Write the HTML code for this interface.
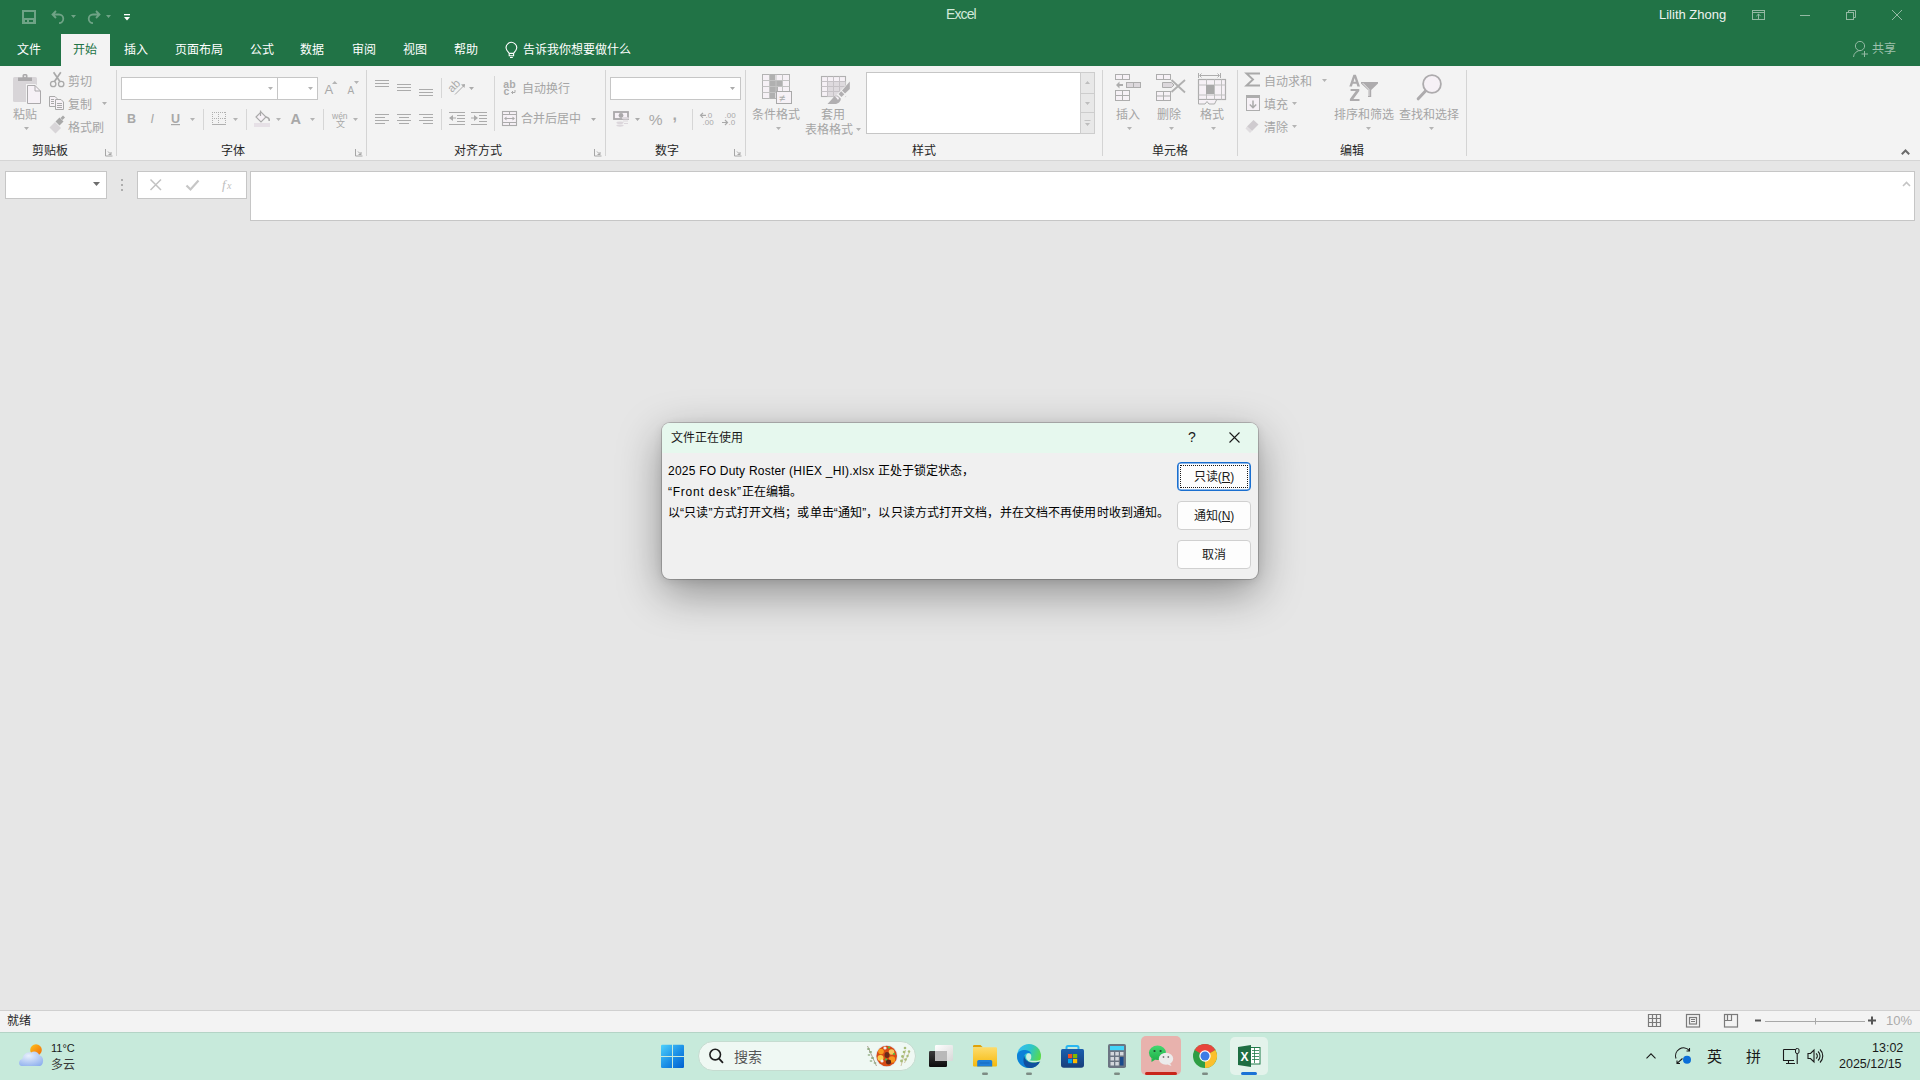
<!DOCTYPE html>
<html lang="zh-CN"><head><meta charset="utf-8">
<style>
*{margin:0;padding:0;box-sizing:border-box}
html,body{width:1920px;height:1080px;overflow:hidden;background:#e6e6e6;font-family:"Liberation Sans",sans-serif;}
.a{position:absolute}
.t{position:absolute;white-space:nowrap;line-height:1}
svg{position:absolute;overflow:visible}
#title{left:0;top:0;width:1920px;height:66px;background:#217346}
.tab{position:absolute;top:43px;font-size:12px;font-weight:500;color:#fff;line-height:14px;white-space:nowrap}
#ribbon{left:0;top:66px;width:1920px;height:95px;background:#f3f3f3;border-bottom:1px solid #d5d5d5}
.sep{position:absolute;width:1px;background:#d4d4d4}
.gl{position:absolute;top:78px;font-size:12px;font-weight:500;color:#262626;line-height:14px;white-space:nowrap}
.dt{position:absolute;margin-top:1px;font-size:12px;font-weight:500;color:#a5a5a5;line-height:14px;white-space:nowrap}
.box{position:absolute;background:#fff;border:1px solid #c6c6c6}
#status{left:0;top:1010px;width:1920px;height:22px;background:#f3f3f3;border-top:1px solid #d0d0d0}
#taskbar{left:0;top:1032px;width:1920px;height:48px;background:#c7eadb;box-shadow:inset 0 1px 0 #b4d4c6}
#dlg{font-weight:500;left:662px;top:423px;width:596px;height:156px;background:#f0f0f0;border-radius:8px;box-shadow:0 14px 44px rgba(0,0,0,0.38),0 2px 10px rgba(0,0,0,0.10),0 0 0 1px rgba(0,0,0,0.18);overflow:hidden}
.btn{position:absolute;left:515px;width:74px;height:29px;background:#fdfdfd;border:1px solid #d0d0d0;border-radius:4px;font-size:12px;line-height:29px;text-align:center;color:#1a1a1a}
</style></head>
<body>
<!-- TITLE BAR -->
<div id="title" class="a">
  <div class="t" style="left:946px;top:7px;font-size:14px;color:#d2e9da;letter-spacing:-0.9px">Excel</div>
  <div class="t" style="left:1659px;top:8px;font-size:13px;color:#eef2ef">Lilith Zhong</div>
  <div class="tab" style="left:17px">文件</div>
  <div class="a" style="left:61px;top:34px;width:49px;height:32px;background:#f3f3f3"></div>
  <div class="tab" style="left:73px;color:#217346">开始</div>
  <div class="tab" style="left:124px">插入</div>
  <div class="tab" style="left:175px">页面布局</div>
  <div class="tab" style="left:250px">公式</div>
  <div class="tab" style="left:300px">数据</div>
  <div class="tab" style="left:352px">审阅</div>
  <div class="tab" style="left:403px">视图</div>
  <div class="tab" style="left:454px">帮助</div>
  <div class="tab" style="left:523px">告诉我你想要做什么</div>
  <div class="tab" style="left:1872px;top:42px;color:#9ec1ad">共享</div>
  <svg width="1920" height="66" style="left:0;top:0">
    <g fill="#6fa386">
      <path fill-rule="evenodd" d="M22,10H36V24H22Z M24,12H34V18H24Z M25,20H27V22H25Z M29,20H33V22H29Z"/>
      <path d="M71,15H76L73.5,18Z M106,15H111L108.5,18Z"/>
    </g>
    <g fill="none" stroke="#6fa386" stroke-width="1.8">
      <path d="M52.5,14.5H59A4.3,4.3 0 0 1 59,23.1 M56,11 L52.5,14.5 L56,18"/>
      <path d="M99.5,14.5H93A4.3,4.3 0 0 0 93,23.1 M96,11 L99.5,14.5 L96,18"/>
    </g>
    <g fill="#fff"><rect x="124" y="14" width="6" height="1.3"/><path d="M124,17H130L127,20.5Z"/></g>
    <g fill="none" stroke="#93b9a3" stroke-width="1">
      <rect x="1752.5" y="10.5" width="12" height="9"/><path d="M1752.5,12.5H1764.5 M1758.5,19.5V14 M1756.3,16.2L1758.5,14L1760.7,16.2"/>
      <path d="M1800,15.5H1810"/>
      <rect x="1846.5" y="12.5" width="7" height="7"/><path d="M1848.5,12.5V10.5H1855.5V17.5H1853.5"/>
      <path d="M1892,10L1902,20M1902,10L1892,20"/>
      <circle cx="1860" cy="46" r="4.6"/><path d="M1853.5,57A7,7 0 0 1 1861,50.5 M1864.5,51V57 M1861.5,54H1868"/>
    </g>
    <g fill="none" stroke="#fff" stroke-width="1.1">
      <path d="M509.2,53.4L506.9,50.2A5.2,5.2 0 1 1 515.9,50.2L513.6,53.4Z M509.2,53.4V55.8H513.6V53.4 M510,57.5H512.8"/>
    </g>
  </svg>
</div>

<!-- RIBBON -->
<div id="ribbon" class="a">
  <div class="sep" style="left:116px;top:4px;height:86px"></div>
  <div class="sep" style="left:366px;top:4px;height:86px"></div>
  <div class="sep" style="left:605px;top:4px;height:86px"></div>
  <div class="sep" style="left:745px;top:4px;height:86px"></div>
  <div class="sep" style="left:1102px;top:4px;height:86px"></div>
  <div class="sep" style="left:1237px;top:4px;height:86px"></div>
  <div class="sep" style="left:1466px;top:4px;height:86px"></div>
  <div class="box" style="left:121px;top:11px;width:157px;height:23px"></div>
  <div class="box" style="left:277px;top:11px;width:41px;height:23px"></div>
  <div class="box" style="left:610px;top:11px;width:131px;height:23px"></div>
  <div class="box" style="left:866px;top:6px;width:215px;height:62px"></div>
  <div class="a" style="left:1080px;top:6px;width:15px;height:62px;background:#e8e8e8;border:1px solid #cdcdcd"></div>
  <div class="a" style="left:1080px;top:27px;width:15px;height:1px;background:#cdcdcd"></div>
  <div class="a" style="left:1080px;top:46px;width:15px;height:1px;background:#cdcdcd"></div>
  <div class="dt" style="left:13px;top:41px">粘贴</div>
  <div class="dt" style="left:68px;top:8px">剪切</div>
  <div class="dt" style="left:68px;top:31px">复制</div>
  <div class="dt" style="left:68px;top:54px">格式刷</div>
  <div class="dt" style="left:522px;top:15px">自动换行</div>
  <div class="dt" style="left:521px;top:45px">合并后居中</div>
  <div class="dt" style="left:752px;top:41px">条件格式</div>
  <div class="dt" style="left:821px;top:41px">套用</div>
  <div class="dt" style="left:805px;top:56px">表格格式</div>
  <div class="dt" style="left:1116px;top:41px">插入</div>
  <div class="dt" style="left:1157px;top:41px">删除</div>
  <div class="dt" style="left:1200px;top:41px">格式</div>
  <div class="dt" style="left:1264px;top:8px">自动求和</div>
  <div class="dt" style="left:1264px;top:31px">填充</div>
  <div class="dt" style="left:1264px;top:54px">清除</div>
  <div class="dt" style="left:1334px;top:41px">排序和筛选</div>
  <div class="dt" style="left:1399px;top:41px">查找和选择</div>
  <div class="gl" style="left:32px">剪贴板</div>
  <div class="gl" style="left:221px">字体</div>
  <div class="gl" style="left:454px">对齐方式</div>
  <div class="gl" style="left:655px">数字</div>
  <div class="gl" style="left:912px">样式</div>
  <div class="gl" style="left:1152px">单元格</div>
  <div class="gl" style="left:1340px">编辑</div>
</div>

<!-- RIBBON ICONS -->
<svg width="1920" height="170" style="left:0;top:0">
  <!-- clipboard -->
  <rect x="13" y="77" width="24" height="25" rx="1.5" fill="#d8d5d8"/>
  <path d="M18,77.5H32V81H18Z M22.5,77.5V75.5A1.5,1.5 0 0 1 24,74H26A1.5,1.5 0 0 1 27.5,75.5V77.5Z" fill="#aba9ab"/>
  <rect x="24.2" y="75.5" width="1.6" height="1.6" fill="#f3f3f3"/>
  <path d="M26,84H35.5L41.5,90V105H26Z" fill="#f3f3f3"/>
  <path d="M27.5,85.5H35L40.5,91V103.5H27.5Z" fill="#f6f1f6" stroke="#aba9ab" stroke-width="1"/>
  <path d="M35,85.5V91H40.5" fill="none" stroke="#aba9ab" stroke-width="1"/>
  <path d="M24,127H29L26.5,130Z M102,102H107L104.5,105Z" fill="#b0b0b0"/>
  <!-- scissors -->
  <g fill="none" stroke="#a9a9a9" stroke-width="1.3">
    <circle cx="53.2" cy="84" r="2.7"/><circle cx="61.2" cy="84" r="2.7"/>
    <path d="M54.5,81.6L60.8,72.3 M59.9,81.6L53.6,72.3" stroke-width="1.7"/>
  </g>
  <!-- copy -->
  <g fill="#f6f1f6" stroke="#a9a9a9" stroke-width="1">
    <path d="M49.5,96.5H55L57,98.5V106.5H49.5Z"/>
    <path d="M55.5,99.5H61L63.5,102V109.5H55.5Z"/>
  </g>
  <path d="M51,99.5H54 M51,101.5H54 M51,103.5H54 M57,103.5H62 M57,105.5H62 M57,107.5H62" fill="none" stroke="#a9a9a9" stroke-width="1"/>
  <!-- format painter -->
  <path d="M49.5,127.5L55,122L61,128L55.5,133.5Z" fill="#d8d5d8"/>
  <path d="M55.5,121.5L59.5,117.5L63.5,121.5L59.5,125.5Z" fill="#a9a9a9"/>
  <path d="M60.5,118L63,115.5L65,117.5L62.5,120Z" fill="#a9a9a9"/>
  <!-- font group -->
  <g fill="#b4b4b4">
    <path d="M268,87H273L270.5,90Z M308,87H313L310.5,90Z M190,118H195L192.5,121Z M233,118H238L235.5,121Z M276,118H281L278.5,121Z M310,118H315L312.5,121Z M353,118H358L355.5,121Z"/>
    <path d="M332,84H337.5L334.75,81Z M354,81H359L356.5,84Z"/>
  </g>
  <g fill="#a8a8a8" font-family="Liberation Sans" >
    <text x="324.5" y="94" font-size="13">A</text>
    <text x="347.5" y="94" font-size="10">A</text>
    <text x="127" y="123" font-size="12.5" font-weight="bold">B</text>
    <text x="150.5" y="123" font-size="12.5" font-style="italic">I</text>
    <text x="171" y="123" font-size="12.5" font-weight="bold">U</text>
    <text x="290.5" y="124" font-size="14.5" font-weight="bold">A</text>
    <text x="332" y="119" font-size="8.5">wén</text>
  </g>
  <text x="336" y="127" font-size="9" fill="#a8a8a8" font-family="Liberation Sans">文</text>
  <rect x="171" y="124" width="9" height="1.2" fill="#a8a8a8"/>
  <g fill="none" stroke="#b0b0b0" stroke-width="1" stroke-dasharray="1,1">
    <path d="M212,112.5H226 M212,118.5H226 M212.5,112V124 M218.5,112V124 M225.5,112V124"/>
  </g>
  <rect x="212" y="124" width="14" height="1" fill="#b0b0b0"/>
  <rect x="254" y="123" width="16" height="4" fill="#e6e0e6"/>
  <path d="M256,117L261,112L266,117L261,122Z" fill="#f6f1f6" stroke="#a9a9a9" stroke-width="1.1"/>
  <path d="M260.5,116V110.5" stroke="#a9a9a9" stroke-width="1.2"/>
  <path d="M266,117C268.5,117.5 269.5,119 269.2,121" fill="none" stroke="#a9a9a9" stroke-width="1.6"/>
  <g fill="#d6d6d6"><rect x="203" y="109" width="1" height="21"/><rect x="246" y="109" width="1" height="21"/><rect x="323" y="109" width="1" height="21"/>
    <rect x="441" y="78" width="1" height="20"/><rect x="441" y="109" width="1" height="21"/><rect x="494" y="76" width="1" height="55"/><rect x="692" y="109" width="1" height="21"/></g>
  <!-- alignment -->
  <g fill="none" stroke="#ababab" stroke-width="1">
    <path d="M375,80.5H389M375,83.5H389M375,86.5H389"/>
    <path d="M397,84.5H411M397,87.5H411M397,90.5H411"/>
    <path d="M419,89.5H433M419,92.5H433M419,95.5H433"/>
    <path d="M375,114.5H389M375,117.5H385M375,120.5H389M375,123.5H385"/>
    <path d="M397,114.5H411M399,117.5H409M397,120.5H411M399,123.5H409"/>
    <path d="M419,114.5H433M423,117.5H433M419,120.5H433M423,123.5H433"/>
    <path d="M449,112.5H465M457,115.5H465M457,118.5H465M457,121.5H465M449,124.5H465"/>
    <path d="M471,112.5H487M479,115.5H487M479,118.5H487M479,121.5H487M471,124.5H487"/>
    <path d="M455,94.5L464.5,85"/>
    <rect x="502.5" y="111.5" width="14" height="14" fill="#f6f1f6" stroke-width="1.1"/>
    <path d="M502.5,114.5H516.5M502.5,122.5H516.5M509.5,111.5V114.5M509.5,122.5V125.5M505,118.5H514"/>
  </g>
  <g fill="#ababab">
    <path d="M449,118L453,115V121Z M456,118.6H452V117.4H456Z"/>
    <path d="M478,118L474,115V121Z M471,118.6H475V117.4H471Z"/>
    <path d="M465,84L461,84.5L464.5,88Z"/>
    <path d="M504,118.5L506.5,116.5V120.5Z M515,118.5L512.5,116.5V120.5Z"/>
    <path d="M469,87H474L471.5,90Z M591,118H596L593.5,121Z M730,87H735L732.5,90Z M635,118H640L637.5,121Z"/>
  </g>
  <g fill="#ababab" font-family="Liberation Sans">
    <text x="0" y="0" font-size="11.5" transform="translate(452,93) rotate(-45)">ab</text>
    <text x="503.3" y="87.8" font-size="10.5" font-weight="bold">ab</text>
    <text x="503.6" y="95.2" font-size="10.5" font-weight="bold">c</text>
  </g>
  <path d="M515,90V92.5H511.5M513,91L511.5,92.5L513,94" fill="none" stroke="#ababab" stroke-width="1"/>
  <!-- number -->
  <rect x="614" y="112" width="14" height="7" fill="#f6f1f6" stroke="#aaa8aa" stroke-width="1.8"/>
  <circle cx="621" cy="115.5" r="2.4" fill="#aaa8aa"/>
  <g fill="#dcd7dc"><ellipse cx="625.5" cy="118.3" rx="3.6" ry="1.3"/><ellipse cx="620" cy="122.8" rx="3.6" ry="1.3"/><ellipse cx="620" cy="125.6" rx="3.6" ry="1.1"/></g>
  <path d="M623,121H628M624,123.5H628" stroke="#dcd7dc" stroke-width="1"/>
  <g fill="#a9a9a9" font-family="Liberation Sans">
    <text x="648.8" y="124.8" font-size="15.5">%</text>
    <text x="672.5" y="119.5" font-size="16" font-weight="bold">,</text>
    <text x="705.5" y="118" font-size="8">.0</text><text x="702.5" y="125" font-size="8">.00</text>
    <text x="724.5" y="118" font-size="8">.00</text><text x="728.5" y="125" font-size="8">.0</text>
  </g>
  <g fill="none" stroke="#a9a9a9" stroke-width="1.2"><path d="M700.5,115.3H706M703,112.8L700.5,115.3L703,117.8 M722,122.5H727.5M725,120L727.5,122.5L725,125"/></g>
  <!-- conditional formatting -->
  <g fill="#f6f1f6" stroke="#b3b3b3" stroke-width="1">
    <rect x="762.5" y="74.5" width="27" height="24"/>
  </g>
  <g fill="#b0b0b0">
    <rect x="770" y="75" width="5" height="23"/><rect x="775" y="81" width="7" height="5"/><rect x="775" y="87" width="3" height="5"/>
  </g>
  <g fill="none" stroke="#c3c3c3" stroke-width="1">
    <path d="M769.5,74.5V98.5M776,74.5V98.5M782.5,74.5V98.5M762.5,80.5H789.5M762.5,86.5H789.5M762.5,92.5H789.5"/>
  </g>
  <rect x="776.5" y="91.5" width="15" height="12" fill="#f6f1f6" stroke="#a9a9a9" stroke-width="1"/>
  <text x="779" y="101.5" font-size="11" fill="#a9a9a9" font-family="Liberation Sans">≠</text>
  <!-- format as table -->
  <rect x="821.5" y="76.5" width="24" height="20" fill="#f6f1f6" stroke="#b0b0b0" stroke-width="1.1"/>
  <rect x="827.5" y="81.5" width="18" height="15" fill="#dedade"/>
  <g fill="none" stroke="#c6c2c6" stroke-width="1"><path d="M827.5,76.5V96.5M833.5,76.5V96.5M839.5,76.5V96.5M821.5,81.5H845.5M821.5,86.5H845.5M821.5,91.5H845.5"/></g>
  <path d="M852,79L852,90L844,98L834,99L834,97.5Z" fill="#f3f3f3"/>
  <path d="M849.8,81.5V89L845,93.5L842,90.5Z" fill="#b1afb1"/>
  <path d="M841.2,91.3L844.3,94.3L841.5,97L838.5,94Z" fill="#b1afb1"/>
  <path d="M837.5,95.5C835,95 833.5,97 832.5,98.5L827.5,104H835C838,104 841,101.5 840.8,98.5Z" fill="#b1afb1"/>
  <path d="M835,96.5C836.5,96 838.5,96.5 839,98.5L838,100C837,98.5 836,97.5 835,96.5Z" fill="#f6f1f6"/>
  <path d="M776,127H781L778.5,130Z M856,128H861L858.5,131Z" fill="#b4b4b4"/>
  <path d="M1085,84L1087.5,81L1090,84Z M1085,102L1087.5,105L1090,102Z M1085,123L1087.5,126L1090,123Z" fill="#bdbdbd"/><path d="M1084.5,120.5H1090.5" stroke="#c4c4c4" stroke-width="1"/>
  <!-- cells: insert -->
  <g fill="#f6f1f6" stroke="#adadad" stroke-width="1">
    <rect x="1115.5" y="74.5" width="14" height="5"/><path d="M1122.5,74.5V79.5"/>
    <rect x="1115.5" y="90.5" width="14" height="10"/><path d="M1122.5,90.5V100.5M1115.5,95.5H1129.5"/>
    <rect x="1126.5" y="82.5" width="14" height="5" fill="#dcd8dc"/><path d="M1133.5,82.5V87.5"/>
    <rect x="1156.5" y="74.5" width="14" height="5"/><path d="M1163.5,74.5V79.5"/>
    <rect x="1156.5" y="91.5" width="14" height="9"/><path d="M1163.5,91.5V100.5M1156.5,96H1170.5"/>
    <path d="M1162.5,82.5H1171.5L1174,85L1171.5,87.5H1162.5Z" fill="#dcd8dc"/>
  </g>
  <path d="M1116,85L1119.5,81.5V84H1123V86H1119.5V88.5Z" fill="#adadad"/>
  <path d="M1171.5,80L1185,92.5 M1185,80L1171.5,92" stroke="#b0b0b0" stroke-width="1.8" fill="none"/>
  <!-- cells: format -->
  <rect x="1198.5" y="79.5" width="27" height="20" fill="#f6f1f6" stroke="#adadad" stroke-width="1.2"/>
  <path d="M1206.5,79.5V99.5M1214.5,79.5V99.5M1221.5,79.5V99.5M1198.5,85H1225.5M1198.5,95H1225.5" stroke="#c0c0c0" stroke-width="1" fill="none"/>
  <rect x="1206" y="85" width="8" height="9" fill="#a9a9a9"/>
  <path d="M1198.5,100V104H1205L1207,101.5L1209,104H1214.5L1216.5,100" fill="#f6f1f6" stroke="#adadad" stroke-width="1"/>
  <path d="M1198.5,73V78 M1220.5,73V78 M1200,75.5H1219 M1201.5,73.5L1199.5,75.5L1201.5,77.5 M1217.5,73.5L1219.5,75.5L1217.5,77.5" stroke="#adadad" stroke-width="1" fill="none"/>
  <path d="M1127,127H1132L1129.5,130Z M1169,127H1174L1171.5,130Z M1211,127H1216L1213.5,130Z M1322,79H1327L1324.5,82Z M1292,102H1297L1294.5,105Z M1292,125H1297L1294.5,128Z M1366,127H1371L1368.5,130Z M1429,127H1434L1431.5,130Z" fill="#b4b4b4"/>
  <!-- editing -->
  <path d="M1260,73.5H1246.5L1253,79.5L1246.5,85.5H1260" fill="none" stroke="#a9a9a9" stroke-width="1.9"/>
  <rect x="1246.5" y="95.5" width="13" height="15" fill="#f6f1f6" stroke="#adadad" stroke-width="1"/>
  <rect x="1246" y="95" width="14" height="3" fill="#adadad"/>
  <path d="M1253,100.5V107.5M1249.8,104.5L1253,107.7L1256.2,104.5" fill="none" stroke="#a9a9a9" stroke-width="1.5"/>
  <path d="M1253.5,120L1258.5,124.5L1252,131L1247,126.5Z" fill="#cfcbcf"/>
  <path d="M1247,126.5L1252,131L1250,133L1245.5,128.5Z" fill="#e0dde0"/>
  <path fill-rule="evenodd" d="M1349.3,86.6L1353.4,74.8H1355.9L1360,86.6H1357.4L1356.5,83.8H1352.8L1351.9,86.6Z M1353.5,81.8H1355.8L1354.65,78.1Z" fill="#adabad"/>
  <path d="M1350.6,89H1359.3V90.9L1353.4,99H1359.5V101H1349.9V99.1L1355.8,91H1350.6Z" fill="#adabad"/>
  <path d="M1361,82H1378V83.6L1371.2,90V97H1368V90L1361,83.6Z" fill="#adabad"/>
  <path d="M1362.8,83.2L1368.9,89.3V96" fill="none" stroke="#f3f3f3" stroke-width="0.9"/>
  <circle cx="1432" cy="84" r="8.9" fill="#f6f1f6" stroke="#adabad" stroke-width="1.8"/>
  <path d="M1425.5,91L1418.2,98.8" stroke="#adabad" stroke-width="3" stroke-linecap="round"/>
  <!-- ribbon collapse -->
  <path d="M1901.8,154.2L1905.5,150.5L1909.2,154.2" fill="none" stroke="#6a6a6a" stroke-width="2"/>
  <g fill="none" stroke="#a6a6a6" stroke-width="1">
    <path d="M105.5,149V156H112.5 M108,151.5L111,154.5M111,152V154.5H108.5" />
    <path d="M355.5,149V156H362.5 M358,151.5L361,154.5M361,152V154.5H358.5" />
    <path d="M594.5,149V156H601.5 M597,151.5L600,154.5M600,152V154.5H597.5" />
    <path d="M734.5,149V156H741.5 M737,151.5L740,154.5M740,152V154.5H737.5" />
  </g>
</svg>

<!-- FORMULA BAR -->
<div class="box" style="left:5px;top:171px;width:102px;height:28px"></div>
<div class="box" style="left:137px;top:171px;width:110px;height:28px"></div>
<div class="box" style="left:250px;top:171px;width:1665px;height:50px"></div>

<svg width="1920" height="230" style="left:0;top:0">
  <path d="M93,182H100L96.5,186Z" fill="#6d6d6d"/>
  <g fill="#adadad"><rect x="121" y="179" width="2" height="2"/><rect x="121" y="184" width="2" height="2"/><rect x="121" y="189" width="2" height="2"/></g>
  <path d="M150.5,179.5L161,190 M161,179.5L150.5,190" stroke="#c2c2c2" stroke-width="1.5" fill="none"/>
  <path d="M186.5,185.5L190.5,189.5L198.5,180.5" stroke="#c6c6c6" stroke-width="2.2" fill="none"/>
  <text x="222" y="189" font-family="Liberation Serif" font-style="italic" font-size="13" fill="#bdbdbd">f</text>
  <text x="227" y="189" font-family="Liberation Serif" font-style="italic" font-size="10" fill="#bdbdbd">x</text>
  <path d="M1903,186L1906.5,182.5L1910,186" stroke="#c4c4c4" stroke-width="1.6" fill="none"/>
</svg>

<!-- STATUS BAR -->
<div id="status" class="a">
  <div class="t" style="left:7px;top:3px;font-size:12px;font-weight:500;color:#262626;line-height:14px">就绪</div>
  <div class="t" style="left:1886px;top:3px;font-size:13px;color:#ababab;line-height:14px">10%</div>
  <svg width="1920" height="22" style="left:0;top:-1px">
    <g fill="none" stroke="#7a7a7a" stroke-width="1.2">
      <path d="M1648.5,4.5H1660.5V16.5H1648.5Z M1652.5,4.5V16.5M1656.5,4.5V16.5M1648.5,8.5H1660.5M1648.5,12.5H1660.5"/>
      <rect x="1686.5" y="4.5" width="13" height="12.5"/><rect x="1689.5" y="7.5" width="7" height="6.5"/><path d="M1691,9.5H1695M1691,11.5H1695"/>
      <rect x="1724.5" y="4.5" width="13" height="12.5"/><path d="M1724.5,10.5H1731.5V4.5M1727.5,4.5V10.5"/>
    </g>
    <path d="M1755,10.5H1761" stroke="#555" stroke-width="2"/>
    <path d="M1765,11.5H1865" stroke="#a8a8a8" stroke-width="1"/>
    <path d="M1815.5,8V14.5" stroke="#a8a8a8" stroke-width="1"/>
    <path d="M1868,10.5H1876M1872,6.5V14.5" stroke="#555" stroke-width="2"/>
  </svg>
</div>

<!-- TASKBAR -->
<div id="taskbar" class="a">
  <div class="t" style="left:51px;top:10px;font-size:11px;color:#1a1a1a;line-height:12px">11°C</div>
  <div class="t" style="left:51px;top:27px;font-size:12px;color:#3a3a3a;line-height:13px">多云</div>
  <div class="a" style="left:698px;top:9px;width:218px;height:30px;border-radius:15px;background:#eff8f3;border:1px solid #c5dcd0"></div>
  <div class="t" style="left:734px;top:18px;font-size:14px;color:#555;line-height:15px">搜索</div>
  <div class="a" style="left:1141px;top:4px;width:40px;height:39px;border-radius:5px;background:#e8b2ad"></div>
  <div class="a" style="left:1230px;top:5px;width:38px;height:38px;border-radius:5px;background:#e3f3eb"></div>
  <div class="t" style="left:1707px;top:17px;font-size:15px;color:#1a1a1a;line-height:16px">英</div>
  <div class="t" style="left:1746px;top:17px;font-size:15px;color:#1a1a1a;line-height:16px">拼</div>
  <div class="t" style="left:1872px;top:10px;font-size:12.5px;color:#1a1a1a;line-height:13px">13:02</div>
  <div class="t" style="left:1839px;top:26px;font-size:12.5px;color:#1a1a1a;line-height:13px">2025/12/15</div>
</div>
<svg width="1920" height="1080" style="left:0;top:0">
  <defs>
    <linearGradient id="win" gradientUnits="userSpaceOnUse" x1="661" y1="1045" x2="684" y2="1068"><stop offset="0" stop-color="#4cd0fb"/><stop offset="0.55" stop-color="#1a8ee6"/><stop offset="1" stop-color="#0060d0"/></linearGradient>
    <linearGradient id="tvw" x1="0" y1="0" x2="1" y2="1"><stop offset="0" stop-color="#ffffff"/><stop offset="1" stop-color="#d8d8d8"/></linearGradient>
    <linearGradient id="tvb" x1="0" y1="0" x2="0" y2="1"><stop offset="0" stop-color="#3c3c3c"/><stop offset="1" stop-color="#0c0c0c"/></linearGradient>
    <linearGradient id="fold" x1="0" y1="0" x2="0" y2="1"><stop offset="0" stop-color="#fddc6c"/><stop offset="1" stop-color="#f6b90c"/></linearGradient>
    <linearGradient id="edge1" x1="0" y1="0.2" x2="1" y2="0.6"><stop offset="0" stop-color="#35bdf6"/><stop offset="0.5" stop-color="#2ec5c8"/><stop offset="1" stop-color="#5edc3c"/></linearGradient>
    <linearGradient id="store" x1="0" y1="0" x2="0" y2="1"><stop offset="0" stop-color="#1a5fae"/><stop offset="1" stop-color="#183e7a"/></linearGradient>
    <radialGradient id="cloud" cx="0.4" cy="0.3" r="0.8"><stop offset="0" stop-color="#e8f0fc"/><stop offset="1" stop-color="#8fb0ee"/></radialGradient>
    <linearGradient id="sun" x1="0" y1="0" x2="1" y2="1"><stop offset="0" stop-color="#ffc21a"/><stop offset="1" stop-color="#f06a0a"/></linearGradient>
    <linearGradient id="wcg" x1="0" y1="0" x2="0" y2="1"><stop offset="0" stop-color="#44d870"/><stop offset="1" stop-color="#1fb24a"/></linearGradient>
  </defs>
  <!-- weather -->
  <circle cx="36" cy="1050" r="5.8" fill="url(#sun)"/>
  <path d="M22,1066C18,1066 18,1059.5 22.5,1059C23,1054.5 27,1051.5 31,1052.5C33.5,1050.5 38,1051 39.5,1055.5C43.5,1056 44,1062 42,1064.5C41.3,1065.6 40.5,1066 39,1066Z" fill="url(#cloud)"/>
  <!-- start -->
  <g fill="url(#win)">
    <path d="M661,1046A1.2,1.2 0 0 1 662.2,1044.8H672V1056H661Z"/>
    <path d="M673,1044.8H682.8A1.2,1.2 0 0 1 684,1046V1056H673Z"/>
    <path d="M661,1057H672V1068H662.2A1.2,1.2 0 0 1 661,1066.8Z"/>
    <path d="M673,1057H684V1066.8A1.2,1.2 0 0 1 682.8,1068H673Z"/>
  </g>
  <circle cx="715.2" cy="1054.6" r="5.3" fill="none" stroke="#1e1e1e" stroke-width="1.6"/>
  <path d="M719,1058.6L722.5,1062.3" stroke="#1e1e1e" stroke-width="1.8" stroke-linecap="round"/>
  <!-- food -->
  <path d="M867.5,1046L876.5,1066" stroke="#9a8a7a" stroke-width="0.8"/>
  <g fill="#8faa80"><ellipse cx="868.5" cy="1049" rx="1.5" ry="0.9"/><ellipse cx="870.5" cy="1052" rx="1.6" ry="0.9"/><ellipse cx="869" cy="1055" rx="1.4" ry="0.8"/><ellipse cx="872.5" cy="1058" rx="1.6" ry="0.9"/><ellipse cx="871" cy="1061" rx="1.4" ry="0.8"/><ellipse cx="875" cy="1063" rx="1.5" ry="0.8"/></g>
  <path d="M905.5,1050L901,1066M909.5,1052L904.5,1063" stroke="#c8b890" stroke-width="0.8"/>
  <g fill="#a8bc78"><circle cx="905" cy="1048" r="1.3"/><circle cx="904" cy="1052" r="1.3"/><circle cx="909" cy="1051.5" r="1.2"/><circle cx="902.5" cy="1056.5" r="1.4"/><circle cx="907.5" cy="1056" r="1.2"/><circle cx="905.5" cy="1059.5" r="1.3"/><circle cx="901.5" cy="1061" r="1.4"/></g>
  <circle cx="886.7" cy="1056" r="11" fill="#dde4ee"/>
  <circle cx="886.7" cy="1056" r="10.3" fill="#d84a14"/>
  <circle cx="881" cy="1051.5" r="2.8" fill="#f79a1e"/><circle cx="891.5" cy="1052" r="2.8" fill="#f5c860"/>
  <circle cx="880.5" cy="1058" r="3" fill="#f8cc50"/><circle cx="892" cy="1059.5" r="3.2" fill="#f7951c"/>
  <ellipse cx="887" cy="1055" rx="2.5" ry="3" fill="#6a2a1a"/><ellipse cx="888.5" cy="1062" rx="2.6" ry="2.4" fill="#5a2418"/>
  <circle cx="885" cy="1048" r="1.6" fill="#eee"/><circle cx="882" cy="1061" r="1.6" fill="#eee"/>
  <circle cx="889" cy="1047.5" r="1.1" fill="#4cc040"/><circle cx="894" cy="1054" r="1.1" fill="#4cc040"/><circle cx="886" cy="1059.5" r="1.1" fill="#4cc040"/>
  <!-- task view -->
  <rect x="929" y="1051" width="18" height="16" rx="1.2" fill="url(#tvb)"/>
  <rect x="935" y="1045" width="18" height="16" rx="1.2" fill="url(#tvw)"/>
  <rect x="935" y="1051" width="12" height="10" fill="#b9b9b9"/>
  <!-- explorer -->
  <path d="M973,1046.2A1.2,1.2 0 0 1 974.2,1045H980.5L982.8,1047.2H973Z" fill="#e0a20a"/>
  <rect x="973" y="1047.2" width="24" height="19.3" rx="1" fill="url(#fold)"/>
  <path d="M977.2,1066.5V1061.5A1.6,1.6 0 0 1 978.8,1059.9H990.6A1.6,1.6 0 0 1 992.2,1061.5V1066.5Z" fill="#1f7fd8"/>
  <rect x="980" y="1062.6" width="9.5" height="0.8" fill="#1565b8"/>
  <!-- edge -->
  <circle cx="1029" cy="1056" r="12" fill="url(#edge1)"/>
  <path d="M1040.6,1059.5L1042,1059.5V1069H1028L1030,1068C1034.5,1068 1038.2,1065.5 1040.2,1061.3Z" fill="#c7eadb"/>
  <path d="M1017,1055.5C1017.5,1051.5 1021.5,1049.8 1025.5,1050C1028.5,1050.2 1030.8,1051.8 1031.6,1053.8C1029.5,1052.6 1026.5,1052.8 1025,1054.5C1023.5,1056.3 1023.5,1059.5 1024.8,1062C1026.8,1065.6 1031.5,1067.3 1036.5,1066C1034.6,1067.3 1031.9,1068 1029,1068C1022.4,1068 1017,1062.6 1017,1056Z" fill="#0d80d8"/>
  <path d="M1024.4,1055.5C1024.6,1060.2 1028.3,1062.6 1033,1062.6C1035.8,1062.6 1038.4,1062.1 1040.2,1061.2C1038.2,1065.5 1034.5,1068 1029.8,1068C1026.8,1068 1024.2,1066 1023.6,1062.3C1023.3,1060 1023.5,1057.2 1024.4,1055.5Z" fill="#0f4f9e"/>
  <ellipse cx="1028.7" cy="1056.8" rx="2.6" ry="3.5" fill="#cdeedf"/>
  <path d="M1027.6,1059.4C1030.3,1061 1034.5,1061.4 1040.6,1059.9L1040.2,1061.2C1037,1062.5 1031,1062.7 1028.2,1061Z" fill="#cdeedf"/>
  <!-- store -->
  <path d="M1066.5,1050V1047.5A1.5,1.5 0 0 1 1068,1046H1077A1.5,1.5 0 0 1 1078.5,1047.5V1050" fill="none" stroke="#2ab7f2" stroke-width="2"/>
  <path d="M1061,1050.5A1.5,1.5 0 0 1 1062.5,1049H1082.5A1.5,1.5 0 0 1 1084,1050.5V1065A2.8,2.8 0 0 1 1081.2,1067.8H1063.8A2.8,2.8 0 0 1 1061,1065Z" fill="url(#store)"/>
  <rect x="1068" y="1054" width="4.2" height="4.2" fill="#f25022"/><rect x="1073" y="1054" width="4.2" height="4.2" fill="#7fba00"/>
  <rect x="1068" y="1059" width="4.2" height="4.2" fill="#00a4ef"/><rect x="1073" y="1059" width="4.2" height="4.2" fill="#ffb900"/>
  <!-- calculator -->
  <rect x="1108" y="1044" width="18" height="24" rx="1.8" fill="#6b7582"/>
  <rect x="1110" y="1046" width="14" height="4.2" fill="#44d4f8"/>
  <g fill="#d3d7dc">
    <rect x="1110.5" y="1052" width="3.5" height="3.5"/><rect x="1115.3" y="1052" width="3.5" height="3.5"/><rect x="1120" y="1052" width="3.5" height="3.5"/>
    <rect x="1110.5" y="1057" width="3.5" height="3.5"/><rect x="1115.3" y="1057" width="3.5" height="3.5"/>
    <rect x="1110.5" y="1062" width="3.5" height="3.5"/><rect x="1115.3" y="1062" width="3.5" height="3.5"/>
  </g>
  <rect x="1120" y="1057" width="3.5" height="8.5" fill="#1a4a8c"/>
  <!-- wechat -->
  <rect x="1145" y="1072" width="32" height="3" rx="1.5" fill="#c8261a"/>
  <ellipse cx="1157.5" cy="1052.8" rx="8.6" ry="7.2" fill="url(#wcg)"/>
  <path d="M1151.5,1058L1151.5,1062L1155.5,1059.5Z" fill="#22b850"/>
  <ellipse cx="1166" cy="1058.8" rx="7.2" ry="6" fill="#ececec"/>
  <path d="M1170,1063.5L1171.5,1066L1167.5,1064.5Z" fill="#ececec"/>
  <circle cx="1154.5" cy="1051" r="1.1" fill="#1c4a2c"/><circle cx="1160.6" cy="1051" r="1.1" fill="#1c4a2c"/>
  <circle cx="1163.5" cy="1057" r="0.9" fill="#777"/><circle cx="1168.3" cy="1057" r="0.9" fill="#777"/>
  <!-- chrome -->
  <circle cx="1205" cy="1056" r="12" fill="#2f9e44"/>
  <path d="M1205,1056L1194.6,1050A12,12 0 0 1 1215.4,1050Z" fill="#e8453c"/>
  <path d="M1205,1056L1215.4,1050A12,12 0 0 1 1205,1068Z" fill="#fbc02d"/>
  <path d="M1205,1056L1194.6,1050A12,12 0 0 0 1199.2,1066.5Z" fill="#34a853" opacity="0"/>
  <circle cx="1205" cy="1056" r="5.7" fill="#fff"/>
  <circle cx="1205" cy="1056" r="4.5" fill="#3b7be6"/>
  <!-- excel -->
  <rect x="1241" y="1072" width="16" height="3" rx="1.5" fill="#1a73d6"/>
  <rect x="1250" y="1047.5" width="10" height="16.5" fill="#fff" stroke="#1e7a48" stroke-width="1"/>
  <path d="M1252,1050.5H1259M1252,1053.5H1259M1252,1056.5H1259M1252,1059.5H1259M1254.5,1048V1063" stroke="#1e7a48" stroke-width="0.8"/>
  <path d="M1238,1047L1251,1045V1067L1238,1065Z" fill="#1f6e43"/>
  <text x="1240.5" y="1061" font-family="Liberation Sans" font-weight="bold" font-size="12" fill="#fff">X</text>
  <!-- running dots -->
  <g fill="#7d8c84"><rect x="982" y="1072.5" width="6" height="2.5" rx="1.2"/><rect x="1026" y="1072.5" width="6" height="2.5" rx="1.2"/><rect x="1114" y="1072.5" width="6" height="2.5" rx="1.2"/><rect x="1202" y="1072.5" width="6" height="2.5" rx="1.2"/></g>
  <!-- tray -->
  <path d="M1646.5,1058.3L1651,1053.8L1655.5,1058.3" fill="none" stroke="#1a1a1a" stroke-width="1.1"/>
  <path d="M1676,1058.5A8,8 0 0 1 1689.5,1050.5 M1689.5,1048V1051H1686.5 M1677,1060.5L1677,1063.5H1680M1677.3,1063.2L1682.5,1058.5" fill="none" stroke="#1a1a1a" stroke-width="1.1"/>
  <circle cx="1687" cy="1059.8" r="4" fill="#0b6fd8"/>
  <path d="M1783.5,1049.5H1795.5M1783.5,1049.5V1060.5H1794M1788.5,1060.5V1063.5H1794.5M1786,1063.5H1795" fill="none" stroke="#1a1a1a" stroke-width="1.1"/>
  <rect x="1795.5" y="1048.5" width="3.5" height="5" rx="1.5" fill="none" stroke="#1a1a1a" stroke-width="1"/>
  <path d="M1797.2,1053.5V1064" stroke="#1a1a1a" stroke-width="1.1"/>
  <path d="M1808,1053.5H1810.5L1814,1050V1062L1810.5,1058.5H1808Z" fill="none" stroke="#1a1a1a" stroke-width="1.1"/>
  <path d="M1816,1053.5A3,3 0 0 1 1816,1058.5M1818,1051.5A6,6 0 0 1 1818,1060.5M1820,1049.5A9,9 0 0 1 1820,1062.5" fill="none" stroke="#1a1a1a" stroke-width="1.1"/>
</svg>

<!-- DIALOG -->
<div id="dlg" class="a">
  <div class="a" style="left:0;top:0;width:596px;height:30px;background:#e6f8ee"></div>
  <div class="t" style="left:9px;top:8px;font-size:12px;color:#1a1a1a;line-height:14px">文件正在使用</div>
  <div class="t" style="left:6px;top:41px;font-size:12px;color:#000;line-height:14px"><span style="letter-spacing:0.22px">2025 FO Duty Roster (HIEX _HI).xlsx </span>正处于锁定状态，</div>
  <div class="t" style="left:6px;top:62px;font-size:12px;color:#000;line-height:14px"><span style="letter-spacing:0.75px">“Front desk”</span>正在编辑。</div>
  <div class="t" style="left:6px;top:83px;font-size:12px;color:#000;line-height:14px;letter-spacing:0.12px">以“只读”方式打开文档；或单击“通知”，以只读方式打开文档，并在文档不再使用时收到通知。</div>
  <div class="btn" style="top:39px;border-color:#1a6fd0;box-shadow:inset 0 0 0 0.6px #1a6fd0">只读(<u>R</u>)</div>
  <div class="a" style="left:518px;top:42px;width:68px;height:23px;border:1px dotted #1a1a1a"></div>
  <div class="btn" style="top:78px">通知(<u>N</u>)</div>
  <div class="t" style="left:526px;top:7px;font-size:14px;color:#1a1a1a;line-height:15px">?</div>
  <svg width="20" height="20" style="left:567px;top:9px"><path d="M0.5,0.5L10.5,10.5M10.5,0.5L0.5,10.5" stroke="#1a1a1a" stroke-width="1.1" fill="none"/></svg>
  <div class="btn" style="top:117px">取消</div>
</div>
</body></html>
